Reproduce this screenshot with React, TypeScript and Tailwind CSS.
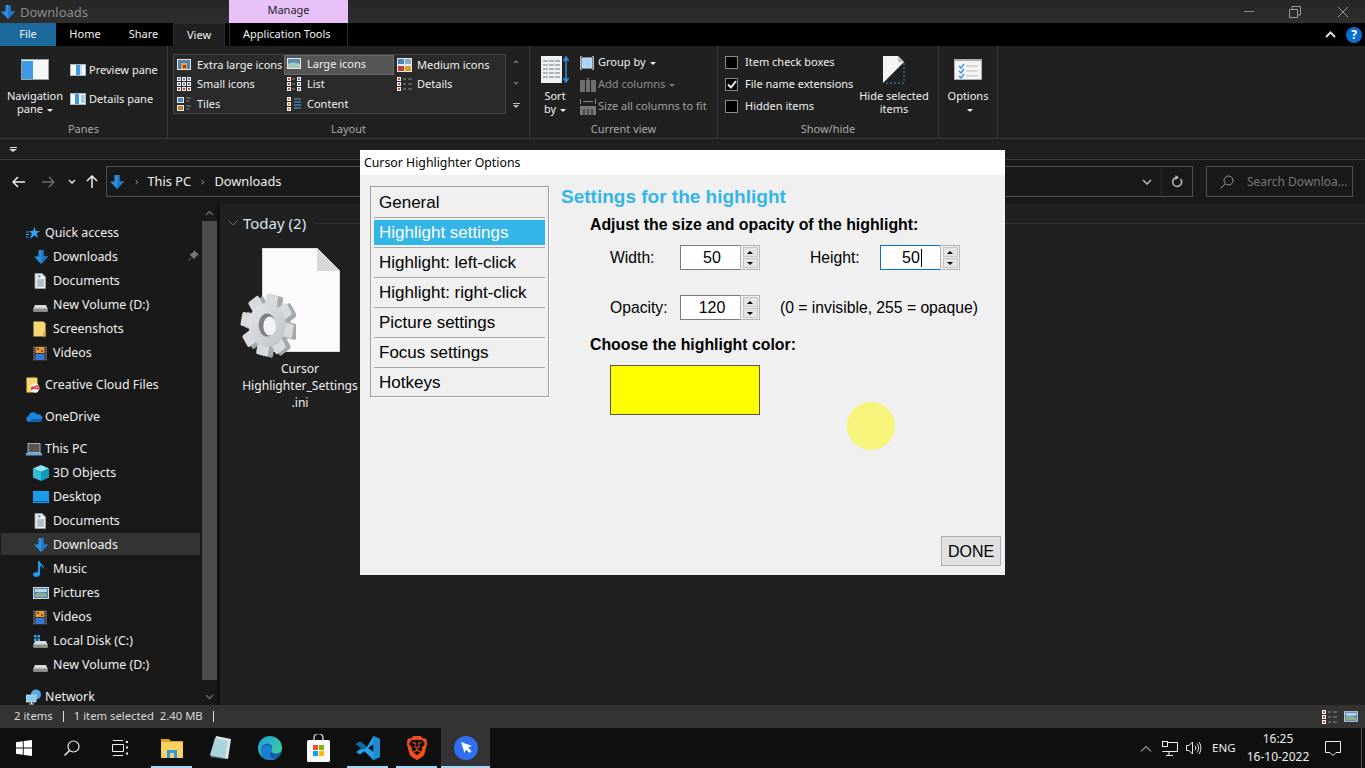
import { ReactNode } from 'react';
import { SiBrave } from 'react-icons/si';

const BlueDown = ({ size = 16 }: { size?: number }) => (
  <svg width={size} height={size} viewBox="0 0 16 16" className="shrink-0">
    <path d="M5.500 1h5v6.500H15L8 15 1 7.500h4.500z" fill="#2f8fe0" />
    <path d="M8 1h2.500v6.500H15L8 15z" fill="#2178c8" />
  </svg>
);

const DocIcon = () => (
  <svg width="14" height="16" viewBox="0 0 14 16">
    <path d="M2 .5h7l3.500 3.500v11.500H2z" fill="#f2f2f2" stroke="#9a9a9a" />
    <path d="M4 7h7M4 9h7M4 11h7M4 13h7" stroke="#7a8a99" />
    <path d="M6 2v3M5 3h3" stroke="#2f8fe0" />
  </svg>
);

const DriveIcon = ({ win = false }: { win?: boolean }) => (
  <svg width="15" height="15" viewBox="0 0 15 15">
    <path d="M2 7h11l1.500 3.500v3H.5v-3z" fill="#d9d9d9" />
    <path d="M.5 10.500h14v3H.5z" fill="#8d8d8d" />
    <rect x="11" y="11.500" width="2" height="1" fill="#45d045" />
    {win && <path d="M1 1h2.500v2.500H1zM4.500 1H7v2.500H4.500zM1 4.500h2.500V7H1zM4.500 4.500H7V7H4.500z" fill="#2fa6e6" />}
  </svg>
);

const FolderIcon = () => (
  <svg width="13" height="16" viewBox="0 0 13 16">
    <path d="M.5.500h10l2 2v13H.5z" fill="#f7d774" />
    <path d="M10 11h2.500v4.500H10z" fill="#d9ad3f" />
  </svg>
);

const FilmIcon = () => (
  <svg width="14" height="15" viewBox="0 0 14 15">
    <rect width="14" height="15" fill="#333" />
    <rect x="2.500" y="1" width="9" height="6" fill="#e0a030" />
    <rect x="2.500" y="8" width="9" height="6" fill="#3a78d8" />
    <path d="M4 2h2v2H4zM8 4h2v2H8z" fill="#b03030" />
    <path d="M1 1v13M13 1v13" stroke="#999" strokeDasharray="1 1" />
  </svg>
);

const CloudIcon = () => (
  <svg width="16" height="10" viewBox="0 0 16 10">
    <path d="M3 10a3 3 0 0 1-.4-5.900A4.500 4.500 0 0 1 11 2.500 3.800 3.800 0 0 1 16 7c0 1.800-1 3-2.500 3z" fill="#1c86dc" />
    <path d="M3 10c2-3 6-4 13-3 0 1.800-1 3-2.500 3z" fill="#0f5fb0" />
  </svg>
);

const StarIcon = () => (
  <svg width="14" height="13" viewBox="0 0 14 13">
    <path d="M8.500 0l1.300 4H14l-3.400 2.600L12 11 8.500 8.300 4 12l1.800-5.400L3 4h4z" fill="#2fa6f2" />
    <path d="M0 5h3M0 7.500h3M0 10h2.500" stroke="#2fa6f2" />
  </svg>
);

const PcIcon = () => (
  <svg width="16" height="13" viewBox="0 0 16 13">
    <rect x="2" y=".5" width="12" height="9" fill="#555" stroke="#aaa" />
    <path d="M0 10h16v2.500H0z" fill="#6aa6d8" />
  </svg>
);

const CubeIcon = () => (
  <svg width="16" height="16" viewBox="0 0 16 16">
    <path d="M8 0l8 3.500L8 7 0 3.500z" fill="#8be8ee" />
    <path d="M0 3.500L8 7v9l-8-3.500z" fill="#2fc0d8" />
    <path d="M16 3.500L8 7v9l8-3.500z" fill="#109cb8" />
  </svg>
);

const DesktopIcon = () => (
  <svg width="16" height="12" viewBox="0 0 16 12">
    <rect width="16" height="12" fill="#1c9cf0" />
    <path d="M1 10.500h14" stroke="#0c5fa8" />
  </svg>
);

const MusicIcon = () => (
  <svg width="12" height="16" viewBox="0 0 12 16">
    <path d="M5 0h1.500c.5 3 5 4 4.500 8-1-2-2.500-3-4-3.200V13c0 1.800-1.700 3-3.500 3S0 15 0 13.500 1.800 11 3.500 11c.6 0 1.100.1 1.500.3z" fill="#1c9cf0" />
  </svg>
);

const PictureIcon = ({ w = 16, h = 12 }: { w?: number; h?: number }) => (
  <svg width={w} height={h} viewBox="0 0 16 12" className="shrink-0">
    <rect x=".5" y=".5" width="15" height="11" fill="#4a84b8" stroke="#d8d8d8" />
    <path d="M2 7c3-2 7-2 12 0v3H2z" fill="#8ab090" />
    <path d="M2 2h12v3H2z" fill="#b8d8ea" />
  </svg>
);

const NetworkIcon = () => (
  <svg width="16" height="16" viewBox="0 0 16 16">
    <circle cx="10" cy="5.500" r="5" fill="#5aa8e0" />
    <rect x="0" y="6" width="10" height="7" fill="#8ccbf0" stroke="#cfe8f8" strokeWidth=".7" />
    <path d="M3 15h5M5.500 13v2" stroke="#ddd" />
  </svg>
);

const CreativeIcon = () => (
  <svg width="15" height="16" viewBox="0 0 15 16">
    <path d="M.5.500h10l1 1v14H.5z" fill="#f7d774" />
    <circle cx="9" cy="11" r="4.500" fill="#f4f4f4" />
    <path d="M5.500 12c0-2 2-2.500 3.500-1s3.500 1 3.500-.7-2-2-3.500-.3-3.500 2-3.500 2z" fill="none" stroke="#e0302a" strokeWidth="1.300" />
  </svg>
);

const PaneIcon = ({ kind }: { kind: 'nav' | 'preview' | 'details' }) => {
  if (kind === 'nav') {
    return (
      <svg width="28" height="21" viewBox="0 0 28 21">
        <rect width="28" height="21" fill="#9ba3aa" />
        <rect x="1" y="1" width="26" height="19" fill="#f7f7f7" />
        <rect x="1" y="2" width="11" height="18" fill="#3f9ae6" />
      </svg>
    );
  }
  return (
    <svg width="16" height="12" viewBox="0 0 16 12" className="shrink-0">
      <rect width="16" height="12" fill="#b0b6bc" />
      <rect x="1" y="1" width="14" height="10" fill="#f7f7f7" />
      <rect x={kind === 'preview' ? 6 : 5} y="1" width="4" height="10" fill="#3f9ae6" />
      {kind === 'details' && <path d="M11 3h3.500M11 5h3.500M11 7h3.500M11 9h3.500" stroke="#3f9ae6" />}
      {kind === 'preview' && <rect x="10" y="1" width="2" height="10" fill="#c8dcf0" />}
    </svg>
  );
};

const Tile = ({ x, y, s = 3, c = '#c05030' }: { x: number; y: number; s?: number; c?: string }) => (
  <>
    <rect x={x} y={y} width={s + 1} height={s + 1} fill="#f4f4f4" />
    <rect x={x + 1} y={y + 1} width={s - 1} height={s - 1} fill={c} />
  </>
);

const LayoutIcon = ({ kind }: { kind: string }) => {
  const lines = (x: number, c: string, step = 3) => (
    <path d={`M${x} 2h7M${x} ${2 + step}h7M${x} ${2 + step * 2}h7M${x} ${2 + step * 3}h7`} stroke={c} />
  );
  return (
    <svg width="15" height="14" viewBox="0 0 15 14" className="shrink-0">
      {kind === 'xl' && (
        <>
          <rect y="1" width="14" height="11" fill="#e8e8e8" />
          <rect x="1" y="2" width="12" height="9" fill="#4a84b8" />
          <rect x="4" y="5" width="6" height="6" fill="#e8a030" />
          <rect x="6" y="7" width="3" height="3" fill="#c03030" />
        </>
      )}
      {kind === 'large' && <g transform="translate(0 1)"><rect width="14" height="11" fill="#e8e8e8" /><rect x="1" y="1" width="12" height="9" fill="#5a8cb0" /><path d="M1 6c3-2 7-2 12 0v4H1z" fill="#a8c8b8" /></g>}
      {kind === 'medium' && (
        <>
          <rect y="0" width="15" height="14" fill="#e8e8e8" />
          <rect x="1" y="1" width="6" height="5" fill="#4a84b8" />
          <rect x="8" y="1" width="6" height="5" fill="#8ab0c8" />
          <rect x="1" y="8" width="6" height="5" fill="#c04030" />
          <rect x="8" y="8" width="6" height="5" fill="#d8a030" />
        </>
      )}
      {kind === 'small' && (
        <>
          {[0, 5, 10].map((x) => [0, 5, 10].map((y) => <Tile key={`${x}-${y}`} x={x} y={y} c={y === 10 ? '#c04030' : '#5a7a9a'} />))}
        </>
      )}
      {kind === 'list' && (
        <>
          {[0, 5, 10].map((y) => <Tile key={y} x={0} y={y} />)}
          {[0, 5, 10].map((y) => <Tile key={y} x={10} y={y} c="#5a7a9a" />)}
          <path d="M5 2h3M5 7h3M5 12h3" stroke="#888" />
        </>
      )}
      {kind === 'details' && (
        <>
          {[0, 5, 10].map((y) => <Tile key={y} x={0} y={y} />)}
          <path d="M6 2h3M11 2h4M6 7h3M11 7h4M6 12h3M11 12h4" stroke="#888" />
        </>
      )}
      {kind === 'tiles' && (
        <>
          <rect width="7" height="6" fill="#e8e8e8" />
          <rect x="1" y="1" width="5" height="4" fill="#4a84b8" />
          <rect y="8" width="7" height="6" fill="#e8e8e8" />
          <rect x="1" y="9" width="5" height="4" fill="#c08030" />
          <path d="M9 1h5M9 4h3M9 9h5M9 12h3" stroke="#888" />
        </>
      )}
      {kind === 'content' && (
        <>
          {[0, 5, 10].map((y) => <Tile key={y} x={0} y={y} c="#d09030" />)}
          {lines(7, '#5aa8e8', 3)}
        </>
      )}
    </svg>
  );
};

const Gear = () => (
  <svg width="56" height="68" viewBox="0 0 66 68" preserveAspectRatio="none">
    <defs>
      <linearGradient id="gearFace" x1="0" y1="0" x2="1" y2="1">
        <stop offset="0" stopColor="#e4e7ea" />
        <stop offset="1" stopColor="#bcc2c8" />
      </linearGradient>
    </defs>
    <g transform="translate(33 34)">
      {[0, 45, 90, 135, 180, 225, 270, 315].map((a) => (
        <rect key={a} x="-8" y="-31" width="16" height="16" rx="2" transform={`translate(4 1) rotate(${a + 12})`} fill="#a4a9ae" />
      ))}
      <circle cx="4" cy="1" r="23" fill="#a4a9ae" />
      {[0, 45, 90, 135, 180, 225, 270, 315].map((a) => (
        <rect key={a} x="-7" y="-31" width="14" height="16" rx="2" transform={`translate(-1 0) rotate(${a + 12})`} fill="#d8dbde" />
      ))}
      <circle cx="-1" cy="0" r="22" fill="url(#gearFace)" />
      <ellipse cx="-1" cy="0" rx="10" ry="11.500" fill="#7d8185" />
      <ellipse cx="2" cy="1" rx="7.500" ry="9.500" fill="#f2f3f4" />
    </g>
  </svg>
);

const EdgeIcon = () => (
  <svg width="24" height="24" viewBox="0 0 24 24">
    <defs>
      <linearGradient id="edgeTop" x1="0" y1="0" x2="1" y2="1">
        <stop offset="0" stopColor="#1b9de2" />
        <stop offset="1" stopColor="#48d88a" />
      </linearGradient>
    </defs>
    <circle cx="12" cy="12" r="12" fill="url(#edgeTop)" />
    <path d="M24 13c0 2-2.500 4.500-6 4.500-3.500 0-5-1.500-5-3 0-1 1-1.500 1-3C14 8 10 6.500 7 8c-4 2-5 6.500-3 10.500C6 22 9.500 24 13 24c6 0 11-5 11-11z" fill="#0f5fa8" />
    <path d="M3 17c0-5 3-8 6.500-8 2.500 0 4.500 1.700 4.500 4 0 3-2 4.500-2 6 0 2.500 3 4 6 3.500-1.700 1-3.500 1.500-5.500 1.500C7.500 24 3 21 3 17z" fill="#1a7fd0" />
  </svg>
);

const StoreIcon = () => (
  <svg width="23" height="28" viewBox="0 0 23 28">
    <path d="M7 7V4a4.500 4.500 0 0 1 9 0v3" fill="none" stroke="#ddd" strokeWidth="1.300" />
    <rect y="6" width="23" height="22" rx="1.500" fill="#fafafa" />
    <rect x="6" y="11" width="5" height="5" fill="#f25022" />
    <rect x="12" y="11" width="5" height="5" fill="#7fba00" />
    <rect x="6" y="17" width="5" height="5" fill="#00a4ef" />
    <rect x="12" y="17" width="5" height="5" fill="#ffb900" />
  </svg>
);

const VsCodeIcon = () => (
  <svg width="24" height="24" viewBox="0 0 24 24">
    <path d="M17.500 0L24 3v18l-6.500 3L7 14l4-3 6.500 5V8L4 18.500 0 16l6-4-6-4 4-2.500L11 11z" fill="#22a0e8" />
    <path d="M17.500 0L24 3v18l-6.500 3z" fill="#1f8ad0" />
    <path d="M0 8l4-2.500L11 11l-4 3z" fill="#0c6aab" />
  </svg>
);

const ExplorerIcon = () => (
  <svg width="22" height="20" viewBox="0 0 22 20">
    <path d="M0 1h8l2 2h12v3H0z" fill="#e0a020" />
    <rect y="4" width="22" height="16" fill="#f8d060" />
    <rect x="6" y="12" width="10" height="8" fill="#2f9ae8" />
    <rect x="9" y="15" width="4" height="5" fill="#f8d060" />
  </svg>
);

const NotepadIcon = () => (
  <svg width="23" height="27" viewBox="0 0 23 27">
    <path d="M7 1l15 3-3 20L2 21z" fill="#e2e4e6" />
    <path d="M6 3l13 3-3 17L1 20z" fill="#a9d4dc" />
    <path d="M1 20l15 3v1L2 22z" fill="#7a8a90" />
  </svg>
);

type NavItem = { label: string; icon: ReactNode; top?: boolean; gap?: boolean; selected?: boolean; pin?: boolean };

const navItems: NavItem[] = [
  { label: 'Quick access', icon: <StarIcon />, top: true },
  { label: 'Downloads', icon: <BlueDown />, pin: true },
  { label: 'Documents', icon: <DocIcon /> },
  { label: 'New Volume (D:)', icon: <DriveIcon /> },
  { label: 'Screenshots', icon: <FolderIcon /> },
  { label: 'Videos', icon: <FilmIcon /> },
  { label: 'Creative Cloud Files', icon: <CreativeIcon />, top: true, gap: true },
  { label: 'OneDrive', icon: <CloudIcon />, top: true, gap: true },
  { label: 'This PC', icon: <PcIcon />, top: true, gap: true },
  { label: '3D Objects', icon: <CubeIcon /> },
  { label: 'Desktop', icon: <DesktopIcon /> },
  { label: 'Documents', icon: <DocIcon /> },
  { label: 'Downloads', icon: <BlueDown />, selected: true },
  { label: 'Music', icon: <MusicIcon /> },
  { label: 'Pictures', icon: <PictureIcon /> },
  { label: 'Videos', icon: <FilmIcon /> },
  { label: 'Local Disk (C:)', icon: <DriveIcon win /> },
  { label: 'New Volume (D:)', icon: <DriveIcon /> },
  { label: 'Network', icon: <NetworkIcon />, top: true, gap: true },
];

const layoutRows = [
  [['xl', 'Extra large icons'], ['large', 'Large icons'], ['medium', 'Medium icons']],
  [['small', 'Small icons'], ['list', 'List'], ['details', 'Details']],
  [['tiles', 'Tiles'], ['content', 'Content'], ['', '']],
];

const RibbonGroup = ({ label, width, children }: { label: string; width: string; children: ReactNode }) => (
  <div className={`flex flex-col shrink-0 border-r border-[#3a3a3a] ${width}`}>
    <div className="h-[74px] flex">{children}</div>
    <div className="h-[18px] flex items-center justify-center text-[#a8a8a8]">{label}</div>
  </div>
);

const Caret = ({ dim = false }: { dim?: boolean }) => (
  <span className={`inline-block ml-1 align-middle border-x-[3px] border-x-transparent border-t-[3px] ${dim ? 'border-t-[#777]' : 'border-t-[#eee]'}`} />
);

const Checkbox = ({ checked = false }: { checked?: boolean }) => (
  <span className="w-[13px] h-[13px] border border-[#8a8a8a] bg-black flex items-center justify-center shrink-0">
    {checked && (
      <svg width="10" height="9" viewBox="0 0 10 9">
        <path d="M1 4.500l3 3 5-6.500" fill="none" stroke="#e8e8e8" strokeWidth="2" />
      </svg>
    )}
  </span>
);

const Spinner = ({ value, focused = false }: { value: string; focused?: boolean }) => (
  <div className="flex w-20 h-[25px] shrink-0">
    <div className={`w-[60px] bg-white flex items-center justify-center border ${focused ? 'border-[#0a6fc8]' : 'border-[#7a7a7a]'} border-r-0 text-[16px] pl-[3px]`}>
      <span className={focused ? 'border-r border-black pr-px leading-[18px]' : ''}>{value}</span>
    </div>
    <div className="w-5 border border-[#b4b4b4] bg-[#f0f0f0] flex flex-col items-center justify-center gap-px p-px">
      {['up', 'down'].map((d) => (
        <div key={d} className="w-[15px] h-[10px] bg-[#e4e4e4] border border-[#c4c4c4] flex items-center justify-center">
          <span className={`border-x-[3px] border-x-transparent ${d === 'up' ? 'border-b-[3px] border-b-black' : 'border-t-[3px] border-t-black'}`} />
        </div>
      ))}
    </div>
  </div>
);

const Dialog = () => {
  const menu = ['General', 'Highlight settings', 'Highlight: left-click', 'Highlight: right-click', 'Picture settings', 'Focus settings', 'Hotkeys'];
  return (
    <div className="absolute left-[360px] top-[150px] w-[645px] h-[425px] bg-[#f0f0f0] flex flex-col font-['Liberation_Sans',Arial,sans-serif] text-black">
      <div className="h-[25px] bg-white flex items-center pl-[4px] pt-[2px] text-[12.300px] font-['Noto_Sans',sans-serif] shrink-0">Cursor Highlighter Options</div>
      <div className="flex flex-1">
        <div className="ml-[10px] mt-[11px] w-[179px] h-[211px] border border-[#a0a0a0] px-[3px] pt-px shrink-0 shadow-[1px_1px_0_#fff]">
          {menu.map((m, i) => (
            <div key={m} className={`h-[30px] flex items-center text-[17px] ${i < menu.length - 1 ? 'border-b border-[#a8a8a8]' : ''}`}>
              <div className={`h-[25px] w-full flex items-center pl-[5px] ${i === 1 ? 'bg-[#33b5e8] text-white' : ''}`}>{m}</div>
            </div>
          ))}
        </div>
        <div className="ml-3 flex flex-col">
          <div className="mt-[11px] h-[22px] leading-[22px] text-[19px] font-bold text-[#33b5e8]">Settings for the highlight</div>
          <div className="mt-[7px] ml-[29px] h-5 leading-5 text-[15.850px] font-bold">Adjust the size and opacity of the highlight:</div>
          <div className="mt-[10px] ml-[49px] flex items-center text-[15.700px]">
            <span className="w-[70px]">Width:</span>
            <Spinner value="50" />
            <span className="w-[70px] ml-[50px]">Height:</span>
            <Spinner value="50" focused />
          </div>
          <div className="mt-[25px] ml-[49px] flex items-center text-[15.700px]">
            <span className="w-[70px]">Opacity:</span>
            <Spinner value="120" />
            <span className="ml-5">(0 = invisible, 255 = opaque)</span>
          </div>
          <div className="mt-[15px] ml-[29px] h-5 leading-5 text-[15.850px] font-bold">Choose the highlight color:</div>
          <div className="mt-[10px] ml-[49px] w-[150px] h-[50px] bg-[#ffff00] border border-[#555]" />
        </div>
      </div>
      <div className="flex justify-end pr-1 pb-[9px]">
        <div className="w-[60px] h-[30px] bg-[#e1e1e1] border border-[#adadad] flex items-center justify-center text-[16px] pt-px">DONE</div>
      </div>
      <div className="absolute left-[487px] top-[252px] w-12 h-12 rounded-full bg-[#f6f47a]" />
    </div>
  );
};

export default function App() {
  return (
    <div className="relative w-[1365px] h-[768px] overflow-hidden flex flex-col bg-[#191919] text-[#f0f0f0] text-[12.400px] font-['Noto_Sans',sans-serif]">
      {/* title bar */}
      <div className="h-[23px] shrink-0 flex items-center bg-gradient-to-b from-[#262626] to-[#2e2e2e] text-[#8c8c8c] text-[13px]">
        <BlueDown size={16} />
        <span className="ml-[4px] w-[209px] pt-[2px]">Downloads</span>
        <div className="w-[119px] h-full bg-[#e8c1f8] text-[#222] text-[11px] flex items-center justify-center pb-[2px]">Manage</div>
        <div className="flex-1" />
        <div className="flex items-center">
          <span className="w-[10px] h-px bg-[#888] mr-[35px]" />
          <svg width="12" height="12" viewBox="0 0 12 12" className="mr-[36px]">
            <path d="M.5 3.500h8v8h-8zM3 3.500V.5h8.500V9H8.500" fill="none" stroke="#999" />
          </svg>
          <svg width="12" height="12" viewBox="0 0 12 12" className="mr-[16px]">
            <path d="M1 1l10 10M11 1L1 11" stroke="#999" />
          </svg>
        </div>
      </div>
      {/* tabs */}
      <div className="h-[23px] shrink-0 bg-black flex items-stretch text-[11px]">
        <div className="w-[56px] bg-[#1c6a9c] flex items-center justify-center">File</div>
        <div className="w-[58px] flex items-center justify-center">Home</div>
        <div className="w-[59px] flex items-center justify-center">Share</div>
        <div className="w-[52px] bg-[#202020] border-x border-t border-[#2c2c2c] flex items-center justify-center">View</div>
        <div className="w-[119px] ml-[4px] border-x border-[#2c2c2c] flex items-center pl-[13px]">Application Tools</div>
        <div className="flex-1" />
        <div className="flex items-center pr-[3px]">
          <svg width="11" height="7" viewBox="0 0 11 7" className="mr-[10px]">
            <path d="M1 6l4.500-4.500L10 6" fill="none" stroke="#ddd" strokeWidth="2" />
          </svg>
          <span className="w-4 h-4 rounded-full bg-[#0a6ed1] flex items-center justify-center font-bold text-[12px] text-white">?</span>
        </div>
      </div>
      {/* ribbon */}
      <div className="h-[93px] shrink-0 bg-[#202020] border-b border-[#3a3a3a] flex text-[11px]">
        <RibbonGroup label="Panes" width="w-[168px]">
          <div className="w-[70px] flex flex-col items-center pt-[13px]">
            <PaneIcon kind="nav" />
            <div className="mt-[9px] text-center leading-[13px]">Navigation<br />pane<Caret /></div>
          </div>
          <div className="flex flex-col pt-[18px] gap-[17px]">
            <div className="flex items-center gap-[3px] h-3 whitespace-nowrap"><PaneIcon kind="preview" />Preview pane</div>
            <div className="flex items-center gap-[3px] h-3 whitespace-nowrap"><PaneIcon kind="details" />Details pane</div>
          </div>
        </RibbonGroup>
        <RibbonGroup label="Layout" width="w-[362px]">
          <div className="ml-[5px] mt-[8px] w-[333px] h-[60px] border border-[#444] bg-[#2a2a2a]">
            {layoutRows.map((row, r) => (
              <div key={r} className="flex h-[19.500px]">
                {row.map(([k, t], c) => (
                  <div key={c} className={`w-[110px] flex items-center gap-[5px] ${t === 'Large icons' ? 'bg-[#555] border border-[#6a6a6a] pl-[2px] pb-[2px]' : 'pl-[3px]'}`}>
                    {k && <LayoutIcon kind={k} />}
                    <span className="whitespace-nowrap">{t}</span>
                  </div>
                ))}
              </div>
            ))}
          </div>
          <div className="w-[20px] mt-[8px] h-[60px] flex flex-col items-center justify-between py-[6px] text-[#777]">
            <span className="border-x-[3px] border-x-transparent border-b-[3px] border-b-[#666]" />
            <span className="border-x-[3px] border-x-transparent border-t-[3px] border-t-[#666]" />
            <span className="flex flex-col items-center gap-px">
              <span className="w-[7px] h-px bg-[#bbb]" />
              <span className="border-x-[3px] border-x-transparent border-t-[3px] border-t-[#bbb]" />
            </span>
          </div>
        </RibbonGroup>
        <RibbonGroup label="Current view" width="w-[188px]">
          <div className="w-[50px] flex flex-col items-center pt-[10px]">
            <svg width="29" height="27" viewBox="0 0 29 27">
              <rect width="21" height="27" fill="#eef0f2" />
              <path d="M2 5h17M2 9h17M2 13h17M2 17h17M2 21h17" stroke="#a8b4bc" strokeWidth="2" strokeDasharray="5 1" />
              <path d="M25 2v23M22.500 5L25 1l2.500 4M22.500 22l2.500 4 2.500-4" fill="none" stroke="#2f8fe0" strokeWidth="1.500" />
            </svg>
            <div className="mt-[6px] text-center leading-[13px]">Sort<br />by<Caret /></div>
          </div>
          <div className="flex flex-col pt-[9px] gap-[7px] whitespace-nowrap">
            <div className="flex items-center gap-1 h-[15px]">
              <svg width="14" height="14" viewBox="0 0 14 14"><rect x="2" y="2" width="10" height="10" fill="#a8d4f8" stroke="#d8ecfc" /><path d="M2 .5H.5v13H2M12 .5h1.500v13H12" fill="none" stroke="#bbb" /></svg>
              <span>Group by<Caret /></span>
            </div>
            <div className="flex items-center gap-[2px] h-[15px] text-[#8e8e8e]">
              <svg width="16" height="14" viewBox="0 0 16 14"><rect y="2" width="16" height="12" fill="#6e6e6e" /><path d="M5.500 2v12M10.500 2v12" stroke="#202020" /><path d="M6 0h4L8 2z" fill="#6e6e6e" /></svg>
              <span>Add columns<Caret dim /></span>
            </div>
            <div className="flex items-center gap-[2px] h-[15px] text-[#a0a0a0]">
              <svg width="16" height="16" viewBox="0 0 16 16"><path d="M.5 0v5M15.500 0v5M3 2.500h10" stroke="#888" /><rect y="7" width="16" height="9" fill="#777" /><path d="M4 10v6M8 10v6M12 10v6" stroke="#202020" /></svg>
              Size all columns to fit
            </div>
          </div>
        </RibbonGroup>
        <RibbonGroup label="Show/hide" width="w-[221px]">
          <div className="flex flex-col pl-[7px] pt-[9px] gap-[7px] w-[141px] whitespace-nowrap">
            <div className="flex items-center gap-[7px] h-[15px]"><Checkbox />Item check boxes</div>
            <div className="flex items-center gap-[7px] h-[15px]"><Checkbox checked />File name extensions</div>
            <div className="flex items-center gap-[7px] h-[15px]"><Checkbox />Hidden items</div>
          </div>
          <div className="w-[70px] flex flex-col items-center pt-[10px] shrink-0">
            <svg width="22" height="28" viewBox="0 0 22 28">
              <path d="M0 0h15l6 6v21H0z" fill="#f4f4f4" />
              <path d="M15 0v6h6z" fill="#bbb" />
              <path d="M0 27L21 6v21z" fill="#202020" />
              <path d="M21 7v20H1" fill="none" stroke="#2f8fe0" strokeDasharray="2 2" />
            </svg>
            <div className="mt-[5px] text-center leading-[13px] whitespace-nowrap">Hide selected<br />items</div>
          </div>
        </RibbonGroup>
        <RibbonGroup label="" width="w-[59px]">
          <div className="w-full flex flex-col items-center pt-[13px]">
            <svg width="28" height="21" viewBox="0 0 28 21">
              <rect width="28" height="21" fill="#a8aeb4" />
              <rect x="1" y="2" width="26" height="18" fill="#f4f4f4" />
              <path d="M12 7h12M12 12h12M12 17h12" stroke="#bbb" />
              <path d="M5 7l2 2 3-4M5 12l2 2 3-4M5 17l2 2 3-4" fill="none" stroke="#2f8fe0" strokeWidth="1.300" />
            </svg>
            <div className="mt-[9px] leading-[13px] text-center">Options<br /><Caret /></div>
          </div>
        </RibbonGroup>
      </div>
      {/* quick access strip */}
      <div className="h-[21px] shrink-0 bg-[#1f1f1f] border-b border-[#3a3a3a] flex items-center pl-[9px]">
        <span className="flex flex-col items-center gap-px">
          <span className="w-[7px] h-px bg-[#ddd]" />
          <span className="border-x-[4px] border-x-transparent border-t-[3px] border-t-[#ddd]" />
        </span>
      </div>
      {/* address row */}
      <div className="h-[44px] shrink-0 bg-[#191919] flex items-center pb-px">
        <div className="w-[106px] flex items-center pl-3 shrink-0">
          <svg width="13" height="12" viewBox="0 0 13 12"><path d="M6 1L1 6l5 5M1 6h12" fill="none" stroke="#eee" strokeWidth="1.500" /></svg>
          <svg width="13" height="12" viewBox="0 0 13 12" className="ml-[17px]"><path d="M7 1l5 5-5 5M12 6H0" fill="none" stroke="#6c6c6c" strokeWidth="1.500" /></svg>
          <svg width="8" height="5" viewBox="0 0 8 5" className="ml-[13px]"><path d="M1 1l3 3 3-3" fill="none" stroke="#ddd" strokeWidth="1.500" /></svg>
          <svg width="12" height="13" viewBox="0 0 12 13" className="ml-[10px]"><path d="M1 6l5-5 5 5M6 1v12" fill="none" stroke="#eee" strokeWidth="1.500" /></svg>
        </div>
        <div className="w-[1087px] h-[31px] border border-[#505050] flex items-center pl-[2px] shrink-0">
          <BlueDown />
          <span className="text-[#888] ml-[10px] mr-[9px] text-[11px]">›</span>
          <span className="text-[12.800px]">This PC</span>
          <span className="text-[#888] ml-[10px] mr-[10px] text-[11px]">›</span>
          <span className="text-[12.800px]">Downloads</span>
          <div className="flex-1" />
          <svg width="10" height="6" viewBox="0 0 10 6" className="mr-[9px]"><path d="M1 1l4 4 4-4" fill="none" stroke="#bbb" strokeWidth="1.500" /></svg>
          <div className="w-[31px] h-full border-l border-[#2a2a2a] flex items-center justify-center">
            <svg width="12" height="13" viewBox="0 0 12 13"><path d="M9.500 4A4.500 4.500 0 1 1 6 2.500" fill="none" stroke="#bbb" strokeWidth="1.500" /><path d="M4.500 0L8 2.500 4.500 5z" fill="#bbb" /></svg>
          </div>
        </div>
        <div className="ml-[13px] w-[147px] h-[31px] border border-[#505050] flex items-center pl-[13px] text-[#777] text-[12px] shrink-0">
          <svg width="14" height="14" viewBox="0 0 14 14"><circle cx="8.500" cy="5.500" r="4.500" fill="none" stroke="#999" /><path d="M5 9l-4.500 4.500" stroke="#999" /></svg>
          <span className="ml-[13px]">Search Downloa...</span>
        </div>
      </div>
      {/* main */}
      <div className="flex-1 flex min-h-0">
        <div className="w-[202px] shrink-0 pt-4 overflow-hidden pl-px pr-[2px]">
          {navItems.map((item, i) => (
            <div key={i} className={`h-6 py-px ${item.gap ? 'mt-2' : ''}`}>
              <div className={`h-full pt-[2px] flex items-center relative whitespace-nowrap ${item.selected ? 'bg-[#333]' : ''} ${item.top ? 'pl-[25px]' : 'pl-8'}`}>
                <span className={`${item.top ? 'w-[19px]' : 'w-5'} flex items-center shrink-0`}>{item.icon}</span>
                {item.label}
                {item.pin && (
                  <svg width="11" height="11" viewBox="0 0 11 11" className="absolute right-px top-[5px]"><path d="M6 0l5 5-2 .5L7 8 6.500 9.500 1.500 4.500 3 4l2.500-2z" fill="#777" /><path d="M3 8L.5 10.500" stroke="#777" /></svg>
                )}
              </div>
            </div>
          ))}
        </div>
        <div className="w-[15px] shrink-0 flex flex-col items-center">
          <div className="h-[17px] flex items-center">
            <svg width="9" height="6" viewBox="0 0 9 6"><path d="M1 5l3.500-3.500L8 5" fill="none" stroke="#666" strokeWidth="1.500" /></svg>
          </div>
          <div className="h-[459px] w-full bg-[#4d4d4d]" />
          <div className="flex-1 flex items-end pb-[5px]">
            <svg width="9" height="6" viewBox="0 0 9 6"><path d="M1 1l3.500 3.500L8 1" fill="none" stroke="#666" strokeWidth="1.500" /></svg>
          </div>
        </div>
        <div className="w-[3px] bg-[#101010] shrink-0" />
        <div className="flex-1 bg-[#202020] relative">
          <div className="flex items-center h-[22px] mt-2 pl-2">
            <svg width="10" height="6" viewBox="0 0 10 6"><path d="M.5.500l4.500 4.500L9.500.500" fill="none" stroke="#666" /></svg>
            <span className="ml-[5px] text-[15px] text-[#d8e4f0]">Today (2)</span>
            <div className="flex-1 h-px bg-[#333] ml-2" />
          </div>
          <div className="ml-[20px] mt-[14px] w-[120px] flex flex-col items-center">
            <div className="relative w-[120px] h-[112px]">
              <svg width="78" height="104" viewBox="0 0 78 104" className="absolute left-[22px] top-0">
                <path d="M0 0h55l23 23v81H0z" fill="#fafbfc" stroke="#bbb" />
                <path d="M55 0v23h23z" fill="#d8d8d8" />
              </svg>
              <div className="absolute left-0 top-[43px]"><Gear /></div>
            </div>
            <div className="text-center leading-[17px] text-[12.100px] whitespace-nowrap">Cursor<br />Highlighter_Settings<br />.ini</div>
          </div>
        </div>
      </div>
      {/* status bar */}
      <div className="h-[23px] shrink-0 bg-[#333] flex items-center pl-[14px] text-[#d8d8d8] text-[11.300px]">
        <span>2 items</span>
        <span className="w-px h-[11px] bg-[#ddd] ml-[10px] mr-[10px]" />
        <span>1 item selected&nbsp; 2.40 MB</span>
        <span className="w-px h-[11px] bg-[#ddd] ml-[10px]" />
        <div className="flex-1" />
        <div className="mr-[7px]"><LayoutIcon kind="details" /></div>
        <div className="mr-[7px]"><PictureIcon w={14} h={11} /></div>
      </div>
      {/* taskbar */}
      <div className="h-10 shrink-0 bg-[#0f0f0f] flex items-stretch text-[#eee] text-[12px]">
        <div className="w-12 flex items-center justify-center">
          <svg width="16" height="16" viewBox="0 0 16 16"><path d="M0 2.200l6.800-1v6.300H0zM7.700 1.100L16 0v7.500H7.700zM0 8.500h6.800v6.300l-6.800-1zM7.700 8.500H16V16l-8.300-1.100z" fill="#fff" /></svg>
        </div>
        <div className="w-12 flex items-center justify-center">
          <svg width="16" height="16" viewBox="0 0 16 16"><circle cx="9.500" cy="6.500" r="5.500" fill="none" stroke="#eee" strokeWidth="1.200" /><path d="M5.500 10.500L.5 15.500" stroke="#eee" strokeWidth="1.500" /></svg>
        </div>
        <div className="w-12 flex items-center justify-center">
          <svg width="16" height="16" viewBox="0 0 16 16"><path d="M1 .5h10M1 15.500h10M.5 4.500h11v7H.5z" fill="none" stroke="#eee" /><path d="M14 1h2v2h-2zM14 6.500h2v2h-2zM14 12.500h2v2h-2z" fill="#eee" /></svg>
        </div>
        <div className="w-[3px]" />
        {[
          { id: 'explorer', icon: <ExplorerIcon />, open: true },
          { id: 'notepad', icon: <NotepadIcon /> },
          { id: 'edge', icon: <EdgeIcon /> },
          { id: 'store', icon: <StoreIcon /> },
          { id: 'vscode', icon: <VsCodeIcon />, open: true },
          { id: 'brave', icon: <SiBrave size={24} color="#f04e1e" />, open: true },
          {
            id: 'cursor',
            active: true,
            icon: (
              <svg width="24" height="24" viewBox="0 0 24 24">
                <circle cx="12" cy="12" r="12" fill="#2f6ff0" />
                <path d="M7 6l11 4-4 1.500 3.500 3.500-2 2-3.500-3.500L10.500 17z" fill="#fff" />
              </svg>
            ),
          },
        ].map((app) => (
          <div key={app.id} className={`relative w-[49px] flex items-center justify-center ${app.active ? 'bg-[#333]' : ''}`}>
            {app.icon}
            {(app.open || app.active) && <span className={`absolute bottom-0 h-[2px] bg-[#a6d8f4] ${app.active ? 'inset-x-0' : 'inset-x-1'}`} />}
          </div>
        ))}
        <div className="flex-1" />
        <div className="flex items-center">
          <svg width="12" height="7" viewBox="0 0 12 7"><path d="M1 6.500l5-5 5 5" fill="none" stroke="#eee" /></svg>
          <svg width="16" height="15" viewBox="0 0 16 15" className="ml-[10px]"><path d="M3 1.500h12.500v9H.5M7 11v3M4 14.500h7" fill="none" stroke="#eee" /><rect x=".5" y=".5" width="5" height="5" fill="#0f0f0f" stroke="#eee" /></svg>
          <svg width="16" height="14" viewBox="0 0 16 14" className="ml-2"><path d="M.5 4.500H3L6.500 1v12L3 9.500H.5zM9 4.500c1 1.500 1 3.500 0 5M11 2.500c2 3 2 6 0 9M13 1c2.500 4 2.500 8 0 12" fill="none" stroke="#eee" /></svg>
          <span className="ml-[10px] w-[24px] text-[11.500px]">ENG</span>
          <div className="ml-[7px] w-[70px] text-center leading-[18px] whitespace-nowrap">16:25<br />16-10-2022</div>
          <svg width="16" height="15" viewBox="0 0 16 15" className="ml-[12px]"><path d="M.5.500h15v11h-4.500L8 14.500 5 11.500H.5z" fill="none" stroke="#eee" /></svg>
          <span className="ml-[20px] mr-[3px] w-px h-full bg-[#555]" />
        </div>
      </div>
      <Dialog />
    </div>
  );
}
